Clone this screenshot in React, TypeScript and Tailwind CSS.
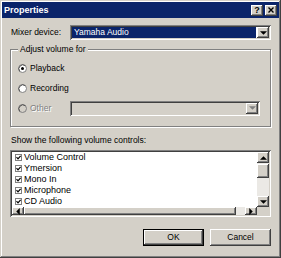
import React from 'react';

const raised =
  'shadow-[inset_-1px_-1px_0_#404040,inset_1px_1px_0_#ffffff,inset_-2px_-2px_0_#808080,inset_2px_2px_0_#d4d0c8]';
const sunken =
  'shadow-[inset_1px_1px_0_#808080,inset_-1px_-1px_0_#ffffff,inset_2px_2px_0_#404040,inset_-2px_-2px_0_#d4d0c8]';

const controls = ['Volume Control', 'Ymersion', 'Mono In', 'Microphone', 'CD Audio'];

const Arrow: React.FC<{ dir: 'up' | 'down' | 'left' | 'right'; color?: string }> = ({
  dir,
  color = '#000',
}) => {
  const pts = {
    down: '0,0 6,0 3,3',
    up: '0,3 6,3 3,0',
    left: '3,0 3,6 0,3',
    right: '0,0 0,6 3,3',
  }[dir];
  const vertical = dir === 'up' || dir === 'down';
  return (
    <svg width={vertical ? 7 : 4} height={vertical ? 4 : 7} viewBox={vertical ? '0 0 6 3' : '0 0 3 6'}>
      <polygon points={pts} fill={color} />
    </svg>
  );
};

const Radio: React.FC<{ checked?: boolean; disabled?: boolean; label: string }> = ({
  checked,
  disabled,
  label,
}) => (
  <div className="flex items-center h-[20px]">
    <svg width="9" height="9" viewBox="0 0 9 9" className="shrink-0">
      <circle cx="4.5" cy="4.5" r="4" fill={disabled ? '#d4d0c8' : '#fff'} stroke="#808080" strokeWidth="1" />
      <path d="M1.7 7.3 A4 4 0 0 1 7.3 1.7" fill="none" stroke="#404040" strokeWidth="0.8" />
      {checked && <circle cx="4.5" cy="4.5" r="1.5" fill="#000" />}
    </svg>
    <span className={`ml-[3px] ${disabled ? 'text-[#808080] [text-shadow:1px_1px_0_#fff]' : ''}`}>{label}</span>
  </div>
);

const Check: React.FC = () => (
  <svg width="7" height="7" viewBox="0 0 7 7" className="shrink-0">
    <rect x="0.5" y="0.5" width="6" height="6" fill="#fff" stroke="#808080" />
    <path d="M1.5 3.2 L3 4.8 L5.6 1.8" fill="none" stroke="#000" strokeWidth="1.2" />
  </svg>
);

export default function App() {
  return (
    <div
      className={`w-[281px] h-[258px] bg-[#d4d0c8] p-[2px] flex flex-col text-[8.5px] leading-[11px] text-black shadow-[inset_-1px_-1px_0_#404040,inset_1px_1px_0_#d4d0c8,inset_-2px_-2px_0_#808080,inset_2px_2px_0_#ffffff]`}
      style={{ fontFamily: '"Liberation Sans", Arial, sans-serif' }}
    >
      {/* title bar */}
      <div className="h-[16px] bg-[#0a246a] flex items-center justify-between pl-[2px] pr-[2px]">
        <span className="text-white font-bold text-[9px]">Properties</span>
        <div className="flex gap-[2px]">
          <div className={`w-[12px] h-[11px] bg-[#d4d0c8] ${raised} flex items-center justify-center font-bold text-[9px] leading-none`}>
            ?
          </div>
          <div className={`w-[12px] h-[11px] bg-[#d4d0c8] ${raised} flex items-center justify-center`}>
            <svg width="6" height="6" viewBox="0 0 6 6">
              <path d="M0.5 0.5 L5.5 5.5 M5.5 0.5 L0.5 5.5" stroke="#000" strokeWidth="1.4" />
            </svg>
          </div>
        </div>
      </div>

      <div className="px-[8px] flex flex-col">
        {/* mixer device */}
        <div className="flex items-center mt-[7px]">
          <span className="w-[60px] pl-[1px]">Mixer device:</span>
          <div className={`w-[201px] h-[15px] bg-white ${sunken} p-[2px] flex`}>
            <div className="flex-1 bg-[#0a246a] text-white pl-[2px] flex items-center mr-[1px]">Yamaha Audio</div>
            <div className={`w-[12px] bg-[#d4d0c8] ${raised} flex items-center justify-center`}>
              <Arrow dir="down" />
            </div>
          </div>
        </div>

        {/* adjust volume group */}
        <div className="relative mt-[9px] h-[78px] border border-[#808080] shadow-[1px_1px_0_#ffffff,inset_1px_1px_0_#ffffff] pt-[8px] pl-[7px] pr-[10px]">
          <span className="absolute -top-[6px] left-[7px] px-[2px] bg-[#d4d0c8]">Adjust volume for</span>
          <Radio checked label="Playback" />
          <Radio label="Recording" />
          <div className="flex items-center">
            <div className="w-[52px]">
              <Radio disabled label="Other" />
            </div>
            <div className={`flex-1 h-[15px] bg-[#d4d0c8] ${sunken} p-[2px] flex justify-end`}>
              <div className={`w-[12px] bg-[#d4d0c8] ${raised} flex items-center justify-center`}>
                <Arrow dir="down" color="#808080" />
              </div>
            </div>
          </div>
        </div>

        {/* volume controls */}
        <div className="mt-[8px] pl-[1px]">Show the following volume controls:</div>
        <div className={`mt-[4px] h-[67px] bg-white ${sunken} p-[2px] flex flex-col`}>
          <div className="flex flex-1">
            <div className="flex-1 flex flex-col">
              {controls.map((c) => (
                <div key={c} className="h-[11px] flex items-center pl-[3px]">
                  <Check />
                  <span className="ml-[2px] text-[9px]">{c}</span>
                </div>
              ))}
            </div>
            <div className="w-[12px] flex flex-col bg-[#ebe9e5]">
              <div className={`h-[11px] bg-[#d4d0c8] ${raised} flex items-center justify-center`}>
                <Arrow dir="up" />
              </div>
              <div className={`h-[14px] bg-[#d4d0c8] ${raised} mt-[1px]`} />
              <div className="flex-1" />
              <div className={`h-[11px] bg-[#d4d0c8] ${raised} flex items-center justify-center`}>
                <Arrow dir="down" />
              </div>
            </div>
          </div>
          <div className="flex h-[12px]">
            <div className="flex-1 flex bg-[#ebe9e5]">
              <div className={`w-[12px] bg-[#d4d0c8] ${raised} flex items-center justify-center`}>
                <Arrow dir="left" />
              </div>
              <div className={`w-[212px] bg-[#d4d0c8] ${raised}`} />
              <div className="flex-1" />
              <div className={`w-[12px] bg-[#d4d0c8] ${raised} flex items-center justify-center`}>
                <Arrow dir="right" />
              </div>
            </div>
            <div className="w-[12px] bg-[#d4d0c8]" />
          </div>
        </div>

        {/* buttons */}
        <div className="flex justify-end gap-[6px] mt-[12px]">
          <div className="w-[61px] h-[17px] border border-black">
            <div className={`w-full h-full bg-[#d4d0c8] ${raised} flex items-center justify-center`}>OK</div>
          </div>
          <div className={`w-[61px] h-[17px] bg-[#d4d0c8] ${raised} flex items-center justify-center`}>Cancel</div>
        </div>
      </div>
    </div>
  );
}
